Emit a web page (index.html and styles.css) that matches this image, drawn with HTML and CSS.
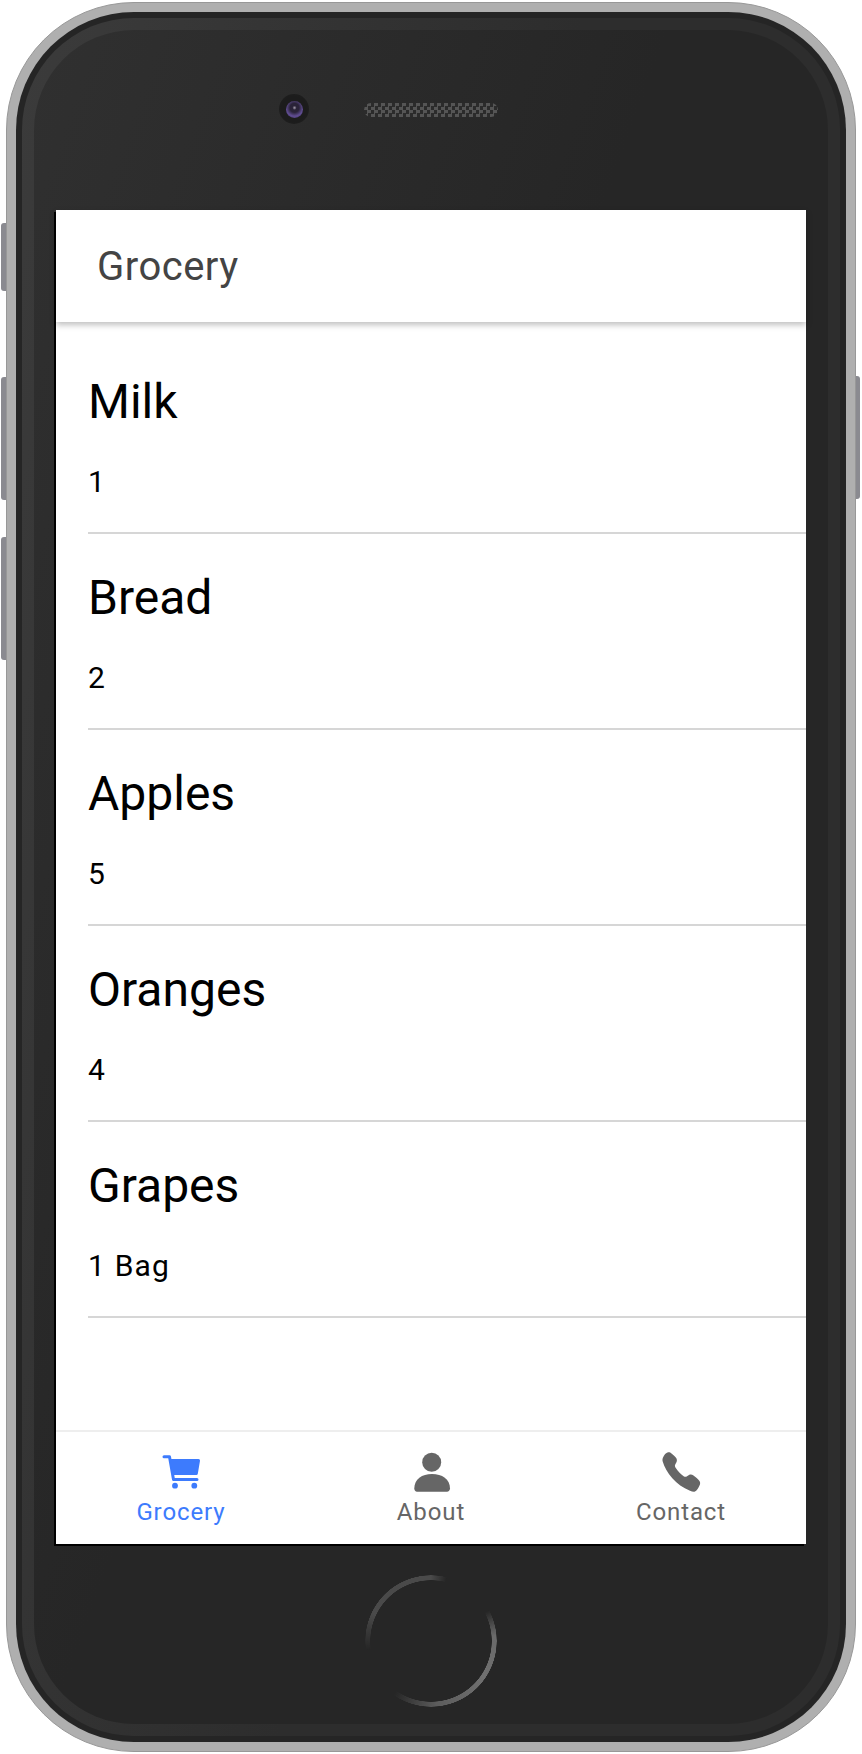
FILE: index.html
```html
<!DOCTYPE html>
<html lang="en">
<head>
  <meta charset="UTF-8">
  <meta name="viewport" content="width=device-width, initial-scale=1.0">
  <title>Grocery</title>
  <link rel="stylesheet" href="styles.css">
</head>
<body>
  <div class="device">
    <span class="side-btn mute"></span>
    <span class="side-btn vol-up"></span>
    <span class="side-btn vol-down"></span>
    <span class="side-btn power"></span>

    <div class="shell">
      <div class="band-dark">
        <div class="band-light">
          <div class="face">
            <div class="top-bezel">
              <div class="camera"><div class="lens"></div></div>
              <div class="speaker"></div>
            </div>

            <div class="screen">
              <header class="app-bar">Grocery</header>
              <ul class="list">
                <li class="item"><div class="item-name">Milk</div><div class="item-qty">1</div></li>
                <li class="item"><div class="item-name">Bread</div><div class="item-qty">2</div></li>
                <li class="item"><div class="item-name">Apples</div><div class="item-qty">5</div></li>
                <li class="item"><div class="item-name">Oranges</div><div class="item-qty">4</div></li>
                <li class="item"><div class="item-name">Grapes</div><div class="item-qty">1 Bag</div></li>
              </ul>
              <nav class="tabs">
                <div class="tab active">
                  <svg class="tab-icon" width="44" height="40" viewBox="0 0 44 40">
                    <path d="M5 4.800H10.500L14.500 27.500H38" fill="none" stroke="currentColor" stroke-width="3" stroke-linecap="round" stroke-linejoin="round"/>
                    <path d="M10.500 7H39.500a1.500 1.500 0 0 1 1.500 1.700L38.800 21.800a1.500 1.500 0 0 1-1.500 1.200H13.500z" fill="currentColor"/>
                    <circle cx="16" cy="33.700" r="2.900"/>
                    <circle cx="35.300" cy="33.700" r="2.900"/>
                  </svg>
                  <span class="tab-label">Grocery</span>
                </div>
                <div class="tab">
                  <svg class="tab-icon" width="44" height="40" viewBox="0 0 44 40">
                    <circle cx="22.700" cy="10.300" r="9.500"/>
                    <path d="M5.300 36.500C5.300 27 13 22 23 22S41 27 41 36.500C41 38.500 39.500 39.700 38 39.700H8C6.500 39.700 5.300 38.500 5.300 36.500z"/>
                  </svg>
                  <span class="tab-label">About</span>
                </div>
                <div class="tab">
                  <svg class="tab-icon" width="44" height="40" viewBox="0 0 44 40">
                    <path d="M4 5.500C5 3 7 .8 9 .3C10.500 0 11.500 .6 12.500 1.500C14.500 3 16.500 5 17.500 6.500C18.200 8 18 9.500 17 11L16 13C15.800 14 16 15 16.800 16C19 19.500 22 22.500 25 24.500C26 25 27 25 28 24.200L30 23C31.500 22.300 33 22.500 34.500 23.500C36.500 25 39 27 40.500 29C41.500 30.500 41.200 32 40.500 33.500C39.500 36 38 38.500 36 39.500C34.500 40 33 39.500 31 38.800C17 33 7 21 3.700 9.500C3.300 8 3.400 6.800 4 5.500z"/>
                  </svg>
                  <span class="tab-label">Contact</span>
                </div>
              </nav>
            </div>

            <div class="chin">
              <div class="home-ring"></div>
            </div>
          </div>
        </div>
      </div>
    </div>
  </div>
</body>
</html>
```

FILE: styles.css
```css
/* page */
body {
  margin: 0;
  background: #fff;
  font-family: Roboto, "Liberation Sans", sans-serif;
}

.device {
  position: relative;
  width: 862px;
  height: 1754px;
  padding: 2px 0 0 6px;
  box-sizing: border-box;
}

/* buttons on the sides of the phone */
.side-btn {
  position: absolute;
  width: 6px;
  background: #8a8a90;
  border-radius: 3px 0 0 3px;
}

.mute { left: 1px; top: 223px; height: 68px; }
.vol-up { left: 1px; top: 377px; height: 123px; }
.vol-down { left: 1px; top: 537px; height: 123px; }
.power { left: 854px; top: 376px; height: 123px; border-radius: 0 3px 3px 0; }

/* phone body, one layer inside the other */
.shell {
  position: relative;
  width: 850px;
  height: 1750px;
  box-sizing: border-box;
  padding: 9px;
  background: #afafaf;
  border: 1px solid #989898;
  border-radius: 128px;
}

.band-dark {
  height: 100%;
  box-sizing: border-box;
  padding: 6px;
  background: #252525;
  border-radius: 118px;
}

.band-light {
  height: 100%;
  box-sizing: border-box;
  padding: 12px;
  background: linear-gradient(100deg, #3b3b3b, #2d2d2d 50%, #2d2d2d);
  border-radius: 112px;
}

.face {
  height: 100%;
  display: flex;
  flex-direction: column;
  background: linear-gradient(110deg, #303030, #262626 45%);
  border-radius: 100px;
}

.top-bezel {
  height: 180px;
  box-sizing: border-box;
  padding: 0 0 20px 245px;
  display: flex;
  align-items: center;
  gap: 55px;
  flex: none;
}

.camera {
  width: 30px;
  height: 30px;
  margin-top: -2px;
  display: flex;
  align-items: center;
  justify-content: center;
  background: radial-gradient(circle, #1c1c1c 60%, #222 100%);
  border-radius: 50%;
}

.lens {
  width: 17px;
  height: 17px;
  background: radial-gradient(circle at 50% 40%, #a8a0b0 0, #2a2338 16%, #2a2338 34%, #5f4c90 62%, #41336a 100%);
  border-radius: 50%;
}

.speaker {
  width: 134px;
  height: 14px;
  background: repeating-conic-gradient(#555 0 25%, #2b2b2b 0 50%) 0 0 / 7px 7px;
  border-radius: 7px;
}

/* app */
.screen {
  flex: none;
  margin-left: 22px;
  width: 750px;
  height: 1334px;
  display: flex;
  flex-direction: column;
  background: #fff;
  box-shadow: -2px 2px 0 #000;
}

.app-bar {
  height: 112px;
  flex: none;
  padding-left: 41px;
  display: flex;
  align-items: center;
  font-size: 40px;
  letter-spacing: 0.5px;
  color: #444;
  box-shadow: 0 3px 6px rgba(0, 0, 0, 0.25);
  position: relative;
}

.list {
  flex: 1;
  margin: 0;
  padding: 16px 0 0 32px;
  list-style: none;
}

.item {
  height: 196px;
  box-sizing: border-box;
  padding-top: 36px;
  border-bottom: 2px solid #d6d6d6;
}

.item-name {
  font-size: 48px;
  line-height: 56px;
  color: #000;
}

.item-qty {
  margin-top: 34px;
  font-size: 30px;
  line-height: 35px;
  letter-spacing: 1.2px;
  color: #000;
}

.tabs {
  height: 114px;
  flex: none;
  display: grid;
  grid-template-columns: repeat(3, 1fr);
  border-top: 2px solid #eee;
  box-sizing: border-box;
}

.tab {
  display: flex;
  flex-direction: column;
  align-items: center;
  padding-top: 20px;
  color: #666;
  fill: currentColor;
}

.tab.active {
  color: #3d7bfd;
}

.tab-icon {
  display: block;
}

.tab-label {
  margin-top: 6px;
  font-size: 24px;
  line-height: 28px;
  letter-spacing: 0.9px;
}

/* home button */
.chin {
  flex: 1;
  display: flex;
  justify-content: center;
  padding-top: 31px;
}

.home-ring {
  width: 132px;
  height: 132px;
  border-radius: 50%;
  background: conic-gradient(
    #4a4a4a 0deg,
    rgba(74, 74, 74, 0) 14deg,
    rgba(100, 100, 100, 0) 62deg,
    #6a6a6a 85deg,
    #707070 125deg,
    #5c5c5c 175deg,
    rgba(100, 100, 100, 0) 215deg,
    rgba(74, 74, 74, 0) 262deg,
    #4a4a4a 295deg,
    #4a4a4a 360deg
  );
  -webkit-mask: radial-gradient(circle, transparent 60.500px, #000 61px, #000 65.500px, transparent 66px);
  mask: radial-gradient(circle, transparent 60.500px, #000 61px, #000 65.500px, transparent 66px);
}
```
